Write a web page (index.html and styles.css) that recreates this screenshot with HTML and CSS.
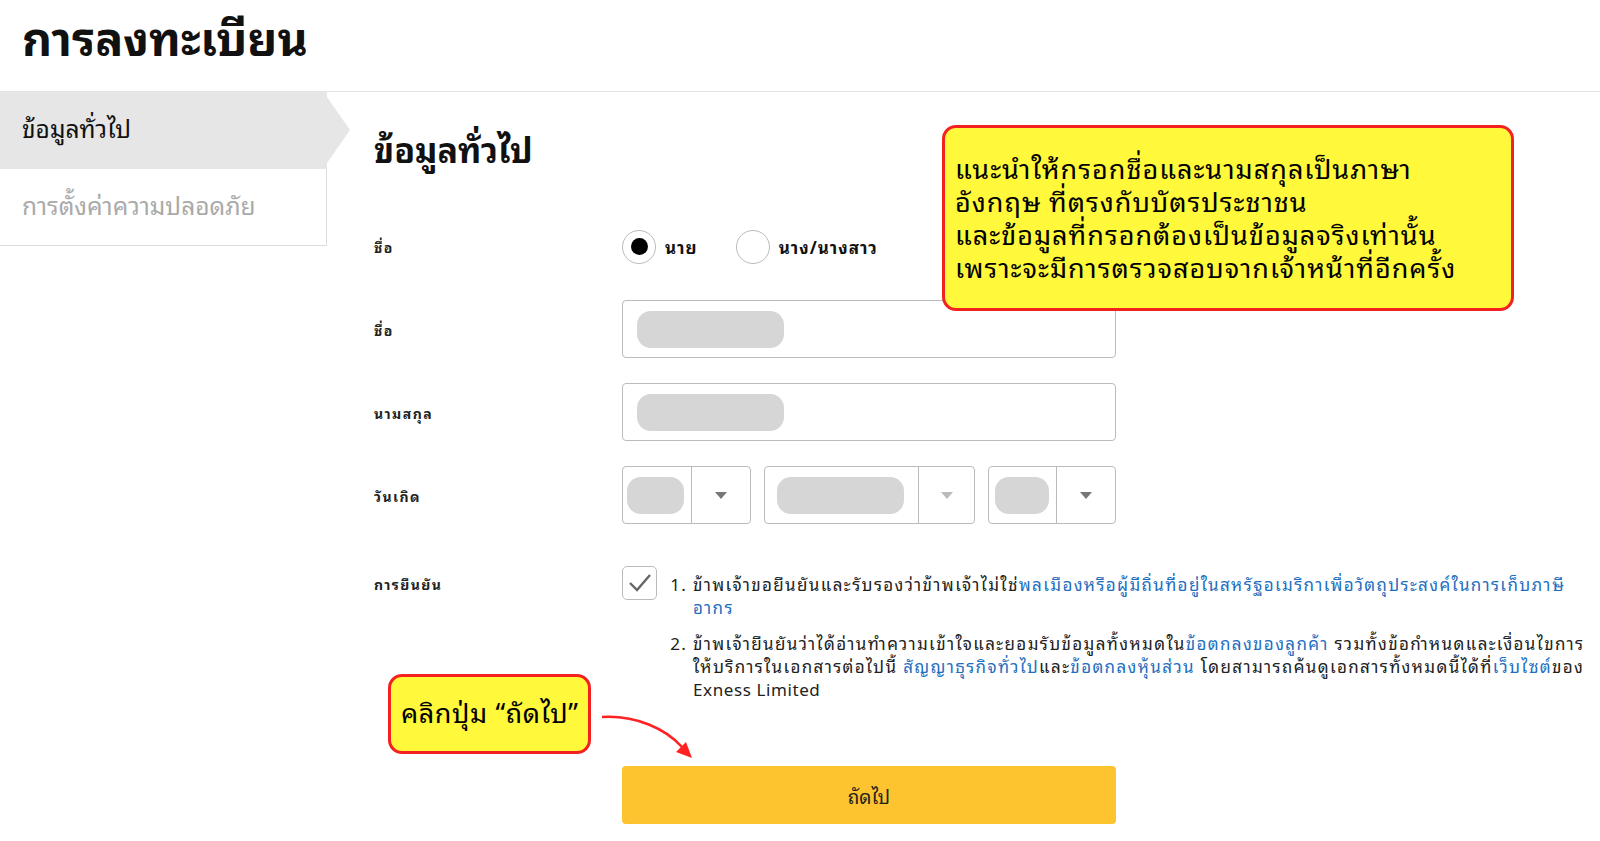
FILE: index.html
```html
<!DOCTYPE html>
<html lang="th">
<head>
  <meta charset="UTF-8" />
  <title>การลงทะเบียน</title>
  <link rel="stylesheet" href="styles.css">
</head>
<body>
  <div class="page-header">
    <h1>การลงทะเบียน</h1>
  </div>

  <div class="layout">
    <div class="sidebar">
      <div class="side-item active">ข้อมูลทั่วไป</div>
      <div class="side-item">การตั้งค่าความปลอดภัย</div>
    </div>

    <div class="main">
      <h2>ข้อมูลทั่วไป</h2>

      <div class="row">
        <div class="label">ชื่อ</div>
        <div class="field radios">
          <label class="radio"><span class="dot checked"></span>นาย</label>
          <label class="radio"><span class="dot"></span>นาง/นางสาว</label>
        </div>
      </div>

      <div class="row">
        <div class="label">ชื่อ</div>
        <div class="field">
          <div class="input"><span class="blur"></span></div>
        </div>
      </div>

      <div class="row">
        <div class="label">นามสกุล</div>
        <div class="field">
          <div class="input"><span class="blur"></span></div>
        </div>
      </div>

      <div class="row">
        <div class="label">วันเกิด</div>
        <div class="field selects">
          <div class="select s-day">
            <div class="sel-value"><span class="blur"></span></div>
            <div class="sel-caret"><span class="caret"></span></div>
          </div>
          <div class="select s-month">
            <div class="sel-value"><span class="blur"></span></div>
            <div class="sel-caret"><span class="caret light"></span></div>
          </div>
          <div class="select s-year">
            <div class="sel-value"><span class="blur"></span></div>
            <div class="sel-caret"><span class="caret"></span></div>
          </div>
        </div>
      </div>

      <div class="row confirm">
        <div class="label">การยืนยัน</div>
        <div class="field confirm-field">
          <div class="checkbox">
            <svg width="26" height="22" viewBox="0 0 26 22"><path d="M3 11 L10 18 L23 3" fill="none" stroke="#666" stroke-width="2.4"/></svg>
          </div>
          <ol class="terms">
            <li>ข้าพเจ้าขอยืนยันและรับรองว่าข้าพเจ้าไม่ใช่<a href="#">พลเมืองหรือผู้มีถิ่นที่อยู่ในสหรัฐอเมริกาเพื่อวัตถุประสงค์ในการเก็บภาษี<br>อากร</a></li>
            <li>ข้าพเจ้ายืนยันว่าได้อ่านทำความเข้าใจและยอมรับข้อมูลทั้งหมดใน<a href="#">ข้อตกลงของลูกค้า</a> รวมทั้งข้อกำหนดและเงื่อนไขการ<br>ให้บริการในเอกสารต่อไปนี้ <a href="#">สัญญาธุรกิจทั่วไป</a>และ<a href="#">ข้อตกลงหุ้นส่วน</a> โดยสามารถค้นดูเอกสารทั้งหมดนี้ได้ที่<a href="#">เว็บไซต์</a>ของ<br><span class="latin">Exness Limited</span></li>
          </ol>
        </div>
      </div>

      <div class="row">
        <div class="label"></div>
        <div class="field">
          <button class="btn-next">ถัดไป</button>
        </div>
      </div>
    </div>
  </div>

  <div class="note note-big">
    แนะนำให้กรอกชื่อและนามสกุลเป็นภาษา<br>
    อังกฤษ ที่ตรงกับบัตรประชาชน<br>
    และข้อมูลที่กรอกต้องเป็นข้อมูลจริงเท่านั้น<br>
    เพราะจะมีการตรวจสอบจากเจ้าหน้าที่อีกครั้ง
  </div>

  <div class="note note-small">คลิกปุ่ม “ถัดไป”</div>

  <svg class="pointer" width="110" height="60" viewBox="0 0 110 60">
    <path d="M6 12 C 40 10, 70 24, 86 42" fill="none" stroke="#f22" stroke-width="2.5"/>
    <path d="M96 53 L80 47 L90 37 Z" fill="#f22"/>
  </svg>
</body>
</html>
```

FILE: styles.css
```css
* {
  margin: 0;
  padding: 0;
  box-sizing: border-box;
}

body {
  position: relative;
  font-family: "Noto Sans Thai Looped", "Noto Sans Thai", "Noto Sans", "DejaVu Sans", sans-serif;
  color: #111;
  background: #fff;
  width: 1600px;
  height: 841px;
  overflow: hidden;
}

.page-header {
  height: 92px;
  padding-left: 22px;
  border-bottom: 1px solid #e3e3e3;
}

.page-header h1 {
  font-size: 46.5px;
  font-weight: bold;
  line-height: 70px;
}

.layout {
  display: flex;
}

.sidebar {
  width: 327px;
  flex-shrink: 0;
}

.side-item {
  position: relative;
  height: 77px;
  padding-left: 22px;
  font-size: 24.5px;
  line-height: 70px;
  color: #aaa;
  border-right: 1px solid #ddd;
  border-bottom: 1px solid #ddd;
}

.side-item.active {
  background: #e6e6e6;
  color: #111;
  border-color: #e6e6e6;
}

.side-item.active::after {
  content: "";
  position: absolute;
  right: -24px;
  top: 5px;
  border-left: 23px solid #e6e6e6;
  border-top: 33px solid transparent;
  border-bottom: 33px solid transparent;
}

.main {
  padding: 32px 0 0 47px;
  flex: 1;
}

.main h2 {
  font-size: 34px;
  font-weight: bold;
  line-height: 48px;
  margin-bottom: 46px;
}

.row {
  display: flex;
  align-items: center;
  margin-bottom: 25px;
  min-height: 57px;
}

.label {
  width: 248px;
  flex-shrink: 0;
  font-size: 14px;
  font-weight: bold;
  letter-spacing: 1.4px;
  color: #222;
}

.field {
  width: 494px;
}

.radios {
  display: flex;
  gap: 38px;
}

.radio {
  display: flex;
  align-items: center;
  gap: 9px;
  font-size: 17px;
  font-weight: bold;
  letter-spacing: 1px;
}

.dot {
  width: 34px;
  height: 34px;
  border: 1px solid #bbb;
  border-radius: 50%;
  display: flex;
  align-items: center;
  justify-content: center;
}

.dot.checked::after {
  content: "";
  width: 17px;
  height: 17px;
  border-radius: 50%;
  background: #000;
}

.input {
  height: 58px;
  border: 1px solid #bbb;
  border-radius: 4px;
  padding-left: 14px;
  display: flex;
  align-items: center;
}

.blur {
  display: block;
  background: #d6d6d6;
  border-radius: 14px;
  height: 37px;
}

.input .blur {
  width: 147px;
}

.selects {
  display: flex;
  gap: 13px;
}

.select {
  height: 58px;
  border: 1px solid #bbb;
  border-radius: 4px;
  display: flex;
}

.sel-value {
  display: flex;
  align-items: center;
  padding-left: 4px;
  border-right: 1px solid #bbb;
}

.sel-caret {
  flex: 1;
  display: flex;
  align-items: center;
  justify-content: center;
}

.caret {
  border-top: 7px solid #777;
  border-left: 6px solid transparent;
  border-right: 6px solid transparent;
}

.caret.light {
  border-top-color: #bbb;
}

.s-day { width: 129px; }
.s-day .sel-value { width: 69px; }
.s-day .blur { width: 57px; }

.s-month { width: 211px; }
.s-month .sel-value { width: 154px; padding-left: 12px; }
.s-month .blur { width: 127px; }

.s-year { width: 128px; }
.s-year .sel-value { width: 68px; padding-left: 6px; }
.s-year .blur { width: 54px; }

.row.confirm {
  align-items: flex-start;
  margin-top: 42px;
  margin-bottom: 66px;
}

.confirm .label {
  padding-top: 6px;
}

.confirm-field {
  display: flex;
  width: auto;
}

.checkbox {
  width: 35px;
  height: 34px;
  border: 1px solid #bbb;
  border-radius: 5px;
  display: flex;
  align-items: center;
  justify-content: center;
  flex-shrink: 0;
}

.terms {
  margin-left: 14px;
  padding-left: 22px;
  font-size: 17px;
  line-height: 23px;
  letter-spacing: 1.35px;
  color: #222;
  white-space: nowrap;
  margin-top: 6px;
}

.terms .latin {
  letter-spacing: 0.6px;
}

.terms li + li {
  margin-top: 13px;
}

.terms a {
  color: #1f6fbf;
  text-decoration: none;
}

.btn-next {
  width: 494px;
  height: 58px;
  border: none;
  border-radius: 4px;
  background: #fdc42f;
  font-family: inherit;
  font-size: 19px;
  color: #222;
}

.note {
  position: absolute;
  background: #fff83b;
  border: 3px solid #f42121;
  border-radius: 14px;
  font-size: 27px;
  line-height: 33px;
  color: #000;
}

.note-big {
  left: 942px;
  top: 125px;
  width: 572px;
  height: 186px;
  padding: 22px 0 0 10px;
  letter-spacing: 1px;
}

.note-small {
  left: 388px;
  top: 674px;
  width: 203px;
  height: 80px;
  line-height: 68px;
  padding-left: 10px;
  letter-spacing: 0.6px;
}

.pointer {
  position: absolute;
  left: 596px;
  top: 705px;
}
```
